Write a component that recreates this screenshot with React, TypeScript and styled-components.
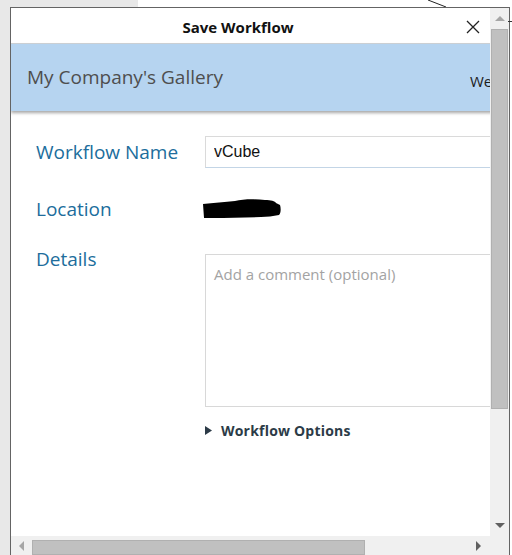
import React from "react";
import styled, { createGlobalStyle } from "styled-components";

const GlobalStyle = createGlobalStyle`
  html, body {
    margin: 0;
    padding: 0;
  }
  body {
    background: #e8e8e8;
    font-family: "Open Sans", "Noto Sans", sans-serif;
  }
`;

const Desktop = styled.div`
  width: 512px;
  height: 555px;
  overflow: hidden;
  display: flex;
  flex-direction: column;
  background: #e8e8e8;
`;

const TopStrip = styled.div`
  height: 7px;
  margin-left: 138px;
  background: #fff;
  position: relative;
  flex: none;
`;

const Connector = styled.svg`
  position: absolute;
  left: 290px;
  top: 0;
`;

const Stage = styled.div`
  flex: 1;
  display: flex;
  min-height: 0;
`;

const Gutter = styled.div`
  width: 10px;
  flex: none;
`;

const CanvasRest = styled.div`
  flex: 1;
  background: #fff;
  position: relative;
`;

const CanvasTick = styled.div`
  position: absolute;
  left: -2px;
  top: 14px;
  width: 6px;
  height: 1px;
  background: #333;
`;

const Dialog = styled.div`
  width: 500px;
  flex: none;
  box-sizing: border-box;
  border: 1px solid #646464;
  border-bottom: none;
  background: #fff;
  display: grid;
  grid-template-columns: 479px 19px;
  grid-template-rows: 528px 19px;
`;

const Viewport = styled.div`
  overflow: hidden;
  position: relative;
`;

const Content = styled.div`
  width: 720px;
`;

const TitleBar = styled.div`
  width: 479px;
  height: 36px;
  box-sizing: border-box;
  border-bottom: 1px solid #cfd3d7;
  display: flex;
  align-items: center;
`;

const Title = styled.h1`
  flex: 1;
  margin: 0;
  text-align: center;
  font-size: 15px;
  font-weight: 700;
  color: #111;
  padding-top: 2px;
`;

const CloseButton = styled.button`
  width: 16px;
  height: 16px;
  margin-right: 9px;
  margin-top: 2px;
  padding: 0;
  border: none;
  background: transparent;
  display: flex;
  align-items: center;
  justify-content: center;
`;

const GalleryBand = styled.div`
  height: 67px;
  background: #b6d4f0;
  box-shadow: 0 2px 3px rgba(0, 0, 0, 0.35);
  display: grid;
  grid-template-columns: 443px auto;
  align-items: center;
  padding-left: 16px;
  position: relative;
`;

const GalleryName = styled.div`
  font-size: 19px;
  color: #4e4e4e;
  margin-top: -1px;
`;

const Welcome = styled.div`
  font-size: 15px;
  color: #1c1c1c;
  margin-top: 7px;
  white-space: nowrap;
`;

const Form = styled.div`
  display: flex;
  flex-direction: column;
  padding: 25px 0 0 25px;
`;

const Row = styled.div<{ $top?: number; $align?: string }>`
  display: grid;
  grid-template-columns: 169px 340px;
  align-items: ${(p) => p.$align || "center"};
  margin-top: ${(p) => p.$top || 0}px;
`;

const Label = styled.div`
  font-size: 19px;
  color: #206d9c;
  line-height: 26px;
`;

const TextInput = styled.input`
  height: 32px;
  box-sizing: border-box;
  border: 1px solid #dadada;
  border-bottom-color: #c3d5e6;
  padding: 0 8px;
  font-family: "Liberation Sans", Arial, sans-serif;
  font-size: 16px;
  color: #111;
  outline: none;
`;

const Redaction = styled.svg`
  margin-left: -2px;
`;

const Comment = styled.textarea`
  height: 153px;
  margin-top: 8px;
  box-sizing: border-box;
  border: 1px solid #d8d8d8;
  padding: 9px 8px;
  resize: none;
  font-family: "Open Sans", "Noto Sans", sans-serif;
  font-size: 15px;
  line-height: 20px;
  outline: none;
  &::placeholder {
    color: #a3a3a3;
  }
`;

const OptionsToggle = styled.button`
  grid-column: 2;
  justify-self: start;
  display: flex;
  align-items: center;
  gap: 9px;
  padding: 0;
  border: none;
  background: transparent;
  font-family: "Open Sans", "Noto Sans", sans-serif;
  font-size: 14px;
  font-weight: 700;
  letter-spacing: 0.2px;
  color: #2c3b47;
`;

const VScroll = styled.div`
  background: #f0f0f0;
  display: flex;
  flex-direction: column;
  align-items: center;
`;

const HScroll = styled.div`
  background: #f0f0f0;
  display: flex;
  align-items: flex-start;
`;

const Corner = styled.div`
  background: #f0f0f0;
`;

const ArrowBox = styled.div<{ $w: number; $h: number }>`
  width: ${(p) => p.$w}px;
  height: ${(p) => p.$h}px;
  flex: none;
  display: flex;
  align-items: center;
  justify-content: center;
`;

const Thumb = styled.div<{ $w: number; $h: number; $top?: number }>`
  width: ${(p) => p.$w}px;
  height: ${(p) => p.$h}px;
  margin-top: ${(p) => p.$top || 0}px;
  flex: none;
  box-sizing: border-box;
  background: #c0c0c0;
  border: 1px solid #b0b0b0;
`;

const Spacer = styled.div`
  flex: 1;
`;

type Dir = "up" | "down" | "left" | "right";

const Tri = ({ dir, color }: { dir: Dir; color: string }) => {
  const pts = {
    up: "0,5 5,0 10,5",
    down: "0,0 10,0 5,5",
    left: "5,0 5,10 0,5",
    right: "0,0 5,5 0,10",
  }[dir];
  const vertical = dir === "up" || dir === "down";
  const w = vertical ? 10 : 5;
  const h = vertical ? 5 : 10;
  return (
    <svg width={w} height={h} viewBox={`0 0 ${w} ${h}`}>
      <polygon points={pts} fill={color} />
    </svg>
  );
};

const Caret = () => (
  <svg width="7" height="9" viewBox="0 0 7 9">
    <polygon points="0,0 7,4.5 0,9" fill="#2c3b47" />
  </svg>
);

export default function App() {
  return (
    <>
      <GlobalStyle />
      <Desktop>
        <TopStrip>
          <Connector width="22" height="7" viewBox="0 0 22 7">
            <line x1="0" y1="0" x2="18" y2="7" stroke="#222" strokeWidth="1" />
          </Connector>
        </TopStrip>
        <Stage>
          <Gutter />
          <Dialog>
            <Viewport>
              <Content>
                <TitleBar>
                  <Title>Save Workflow</Title>
                  <CloseButton aria-label="Close">
                    <svg width="14" height="14" viewBox="0 0 14 14">
                      <path d="M1 1 L13 13 M13 1 L1 13" stroke="#222" strokeWidth="1.3" />
                    </svg>
                  </CloseButton>
                </TitleBar>
                <GalleryBand>
                  <GalleryName>My Company's Gallery</GalleryName>
                  <Welcome>Welcome, User</Welcome>
                </GalleryBand>
                <Form>
                  <Row>
                    <Label>Workflow Name</Label>
                    <TextInput defaultValue="vCube" />
                  </Row>
                  <Row $top={28}>
                    <Label>Location</Label>
                    <Redaction width="78" height="20" viewBox="0 0 78 20">
                      <path
                        d="M0 5 C10 4 22 3 32 2 C40 0 52 0 62 1 C68 1 72 2 73 4 L77 6 C78 9 78 14 76 16 C70 17 64 18 58 18 L20 19 C12 19 5 19 1 19 Z"
                        fill="#000"
                      />
                    </Redaction>
                  </Row>
                  <Row $top={24} $align="start">
                    <Label>Details</Label>
                    <Comment placeholder="Add a comment (optional)" />
                  </Row>
                  <Row $top={14}>
                    <OptionsToggle>
                      <Caret />
                      Workflow Options
                    </OptionsToggle>
                  </Row>
                </Form>
              </Content>
            </Viewport>
            <VScroll>
              <ArrowBox $w={19} $h={21}>
                <Tri dir="up" color="#a6a6a6" />
              </ArrowBox>
              <Thumb $w={17} $h={380} />
              <Spacer />
              <ArrowBox $w={19} $h={22}>
                <Tri dir="down" color="#606060" />
              </ArrowBox>
            </VScroll>
            <HScroll>
              <ArrowBox $w={21} $h={19}>
                <Tri dir="left" color="#a6a6a6" />
              </ArrowBox>
              <Thumb $w={333} $h={15} $top={4} />
              <Spacer />
              <ArrowBox $w={24} $h={19}>
                <Tri dir="right" color="#606060" />
              </ArrowBox>
            </HScroll>
            <Corner />
          </Dialog>
          <CanvasRest>
            <CanvasTick />
          </CanvasRest>
        </Stage>
      </Desktop>
    </>
  );
}
